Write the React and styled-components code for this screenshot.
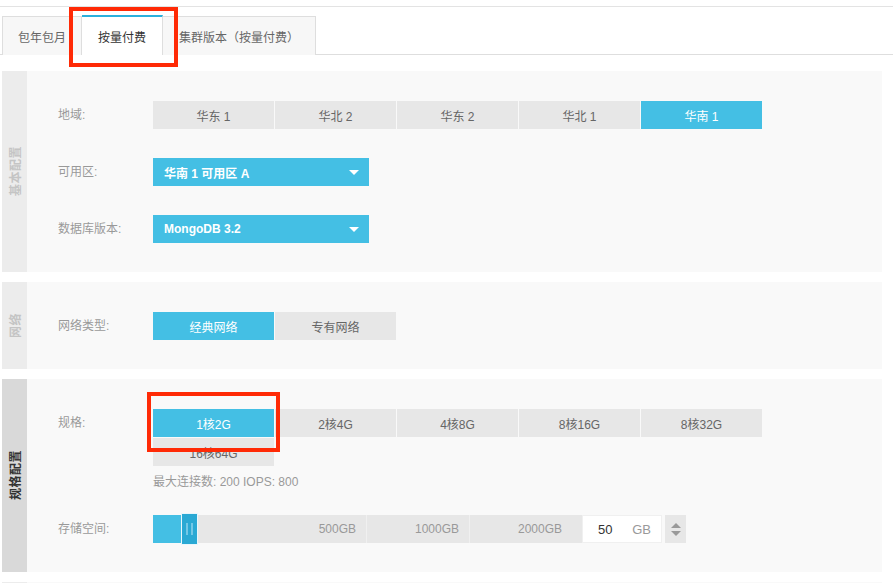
import React from "react";
import styled, { createGlobalStyle } from "styled-components";

const GlobalStyle = createGlobalStyle`
  html, body { margin: 0; padding: 0; background: #fff; }
  body {
    font-family: "Liberation Sans", "Noto Sans CJK SC", sans-serif;
    font-size: 12px;
    color: #666;
  }
  * { box-sizing: border-box; }
`;

const BLUE = "#44bfe4";

const Page = styled.div`
  width: 893px;
  padding-top: 6px;
`;

const TopRule = styled.div`
  height: 1px;
  background: #e3e3e3;
`;

const TabBar = styled.div`
  display: flex;
  margin-top: 8px;
  padding-left: 2px;
  height: 40px;
  border-bottom: 1px solid #dedede;
`;

const Tab = styled.div`
  position: relative;
  height: ${(p) => (p.$active ? "40px" : "39px")};
  padding: 0 ${(p) => p.$px || 15}px;
  display: flex;
  align-items: center;
  border: 1px solid #dedede;
  border-bottom: none;
  border-left-width: ${(p) => (p.$first ? "1px" : "0")};
  border-top: ${(p) => (p.$active ? `2px solid #2bb0dc` : "1px solid #dedede")};
  margin-top: ${(p) => (p.$active ? "0" : "1px")};
  background: ${(p) => (p.$active ? "#fff" : "#f7f7f7")};
  color: ${(p) => (p.$active ? "#333" : "#666")};
  font-size: 12px;
  white-space: nowrap;
`;

const RedBox = styled.div`
  position: absolute;
  top: ${(p) => p.$t}px;
  left: ${(p) => p.$l}px;
  right: ${(p) => p.$r}px;
  bottom: ${(p) => p.$b}px;
  border: 4px solid #ff2a06;
  z-index: 5;
  pointer-events: none;
`;

const Sections = styled.div`
  margin-top: 16px;
  padding-left: 2px;
  width: 882px;
  display: flex;
  flex-direction: column;
  gap: 10px;
`;

const Section = styled.div`
  display: flex;
  background: #f9f9f9;
  min-height: ${(p) => p.$minH || 0}px;
`;

const SideLabel = styled.div`
  width: 25px;
  flex: none;
  background: ${(p) => (p.$active ? "#d9d9d9" : "#ececec")};
  display: flex;
  align-items: center;
  justify-content: center;
`;

const SideText = styled.span`
  writing-mode: vertical-rl;
  text-orientation: sideways;
  transform: rotate(180deg);
  font-weight: 700;
  font-size: 12px;
  letter-spacing: 0.5px;
  color: ${(p) => (p.$active ? "#333" : "#c4c4c4")};
`;

const Body = styled.div`
  flex: 1;
  padding: 30px 0 29px 31px;
  display: flex;
  flex-direction: column;
  gap: ${(p) => p.$gap || 29}px;
`;

const Row = styled.div`
  display: flex;
  align-items: flex-start;
`;

const Label = styled.div`
  width: 95px;
  flex: none;
  line-height: 28px;
  color: #999;
  font-size: 12px;
`;

const ButtonGroup = styled.div`
  display: flex;
  flex-wrap: wrap;
  gap: 1px;
  width: 609px;
`;

const OptButton = styled.div`
  position: relative;
  width: 121px;
  height: 28px;
  display: flex;
  align-items: center;
  justify-content: center;
  background: ${(p) => (p.$active ? BLUE : "#e7e7e7")};
  color: ${(p) => (p.$active ? "#fff" : "#666")};
  font-size: 12px;
`;

const Select = styled.div`
  width: 216px;
  height: 28px;
  background: ${BLUE};
  color: #fff;
  font-weight: 600;
  font-size: 12px;
  display: flex;
  align-items: center;
  justify-content: space-between;
  padding: 0 10px 0 11px;
`;

const Caret = styled.span`
  width: 0;
  height: 0;
  border-left: 5px solid transparent;
  border-right: 5px solid transparent;
  border-top: 5px solid #fff;
`;

const Column = styled.div`
  display: flex;
  flex-direction: column;
`;

const Info = styled.div`
  margin-top: 8px;
  line-height: 16px;
  color: #999;
  font-size: 12px;
`;

const SliderRow = styled.div`
  display: flex;
  align-items: center;
`;

const Track = styled.div`
  position: relative;
  display: flex;
  width: 429px;
  height: 28px;
  background: #e7e7e7;
`;

const Segment = styled.div`
  width: ${(p) => p.$w}px;
  height: 28px;
  display: flex;
  align-items: center;
  justify-content: flex-end;
  padding-right: ${(p) => p.$pr || 10}px;
  color: #999;
  font-size: 12px;
  border-right: ${(p) => (p.$sep ? "1px solid #f0f0f0" : "none")};
`;

const Fill = styled.div`
  position: absolute;
  left: 0;
  top: 0;
  height: 28px;
  background: ${BLUE};
`;

const Handle = styled.div`
  position: absolute;
  top: -2px;
  width: 17px;
  height: 32px;
  background: #2aa9d4;
  border: 1px solid #e9f6fb;
  display: flex;
  align-items: center;
  justify-content: center;
  gap: 3px;
  &::before, &::after {
    content: "";
    width: 2px;
    height: 12px;
    background: #74c8e6;
  }
`;

const NumInput = styled.div`
  width: 80px;
  height: 28px;
  background: #fff;
  display: flex;
  align-items: center;
  justify-content: space-between;
  padding: 0 10px 0 15px;
  font-size: 13px;
  border: 1px solid #f0f0f0;
`;

const NumValue = styled.span`
  color: #333;
`;

const Unit = styled.span`
  color: #999;
`;

const Spinner = styled.div`
  margin-left: 3px;
  width: 21px;
  height: 28px;
  background: #e7e7e7;
  display: flex;
  flex-direction: column;
  align-items: center;
  justify-content: center;
  gap: 3px;
`;

const Tri = styled.span`
  width: 0;
  height: 0;
  border-left: 5px solid transparent;
  border-right: 5px solid transparent;
  ${(p) => (p.$up ? "border-bottom: 5px solid #999;" : "border-top: 5px solid #999;")}
`;

const regions = ["华东 1", "华北 2", "华东 2", "华北 1", "华南 1"];
const specs = ["1核2G", "2核4G", "4核8G", "8核16G", "8核32G", "16核64G"];

export default function App() {
  const fillWidth = 30;
  return (
    <Page>
      <GlobalStyle />
      <TopRule />
      <TabBar>
        <Tab $first>包年包月</Tab>
        <Tab $active $px={16}>
          按量付费
          <RedBox $t={-10} $l={-13} $r={-16} $b={-12} />
        </Tab>
        <Tab $px={16}>集群版本（按量付费）</Tab>
      </TabBar>

      <Sections>
        <Section>
          <SideLabel>
            <SideText>基本配置</SideText>
          </SideLabel>
          <Body>
            <Row>
              <Label>地域:</Label>
              <ButtonGroup>
                {regions.map((r) => (
                  <OptButton key={r} $active={r === "华南 1"}>
                    {r}
                  </OptButton>
                ))}
              </ButtonGroup>
            </Row>
            <Row>
              <Label>可用区:</Label>
              <Select>
                华南 1 可用区 A
                <Caret />
              </Select>
            </Row>
            <Row>
              <Label>数据库版本:</Label>
              <Select>
                MongoDB 3.2
                <Caret />
              </Select>
            </Row>
          </Body>
        </Section>

        <Section>
          <SideLabel>
            <SideText>网络</SideText>
          </SideLabel>
          <Body>
            <Row>
              <Label>网络类型:</Label>
              <ButtonGroup>
                <OptButton $active>经典网络</OptButton>
                <OptButton>专有网络</OptButton>
              </ButtonGroup>
            </Row>
          </Body>
        </Section>

        <Section>
          <SideLabel $active>
            <SideText $active>规格配置</SideText>
          </SideLabel>
          <Body $gap={25}>
            <Row>
              <Label>规格:</Label>
              <Column>
                <ButtonGroup>
                  {specs.map((s, i) => (
                    <OptButton key={s} $active={i === 0}>
                      {s}
                      {i === 0 && <RedBox $t={-17} $l={-6} $r={-6} $b={-15} />}
                    </OptButton>
                  ))}
                </ButtonGroup>
                <Info>最大连接数: 200 IOPS: 800</Info>
              </Column>
            </Row>
            <Row>
              <Label>存储空间:</Label>
              <SliderRow>
                <Track>
                  <Segment $w={214} $sep>500GB</Segment>
                  <Segment $w={103} $sep>1000GB</Segment>
                  <Segment $w={112} $pr={20}>2000GB</Segment>
                  <Fill style={{ width: fillWidth }} />
                  <Handle style={{ left: fillWidth - 2 }} />
                </Track>
                <NumInput>
                  <NumValue>50</NumValue>
                  <Unit>GB</Unit>
                </NumInput>
                <Spinner>
                  <Tri $up />
                  <Tri />
                </Spinner>
              </SliderRow>
            </Row>
          </Body>
        </Section>

        <Section $minH={60}>
          <SideLabel />
          <Body />
        </Section>
      </Sections>
    </Page>
  );
}
